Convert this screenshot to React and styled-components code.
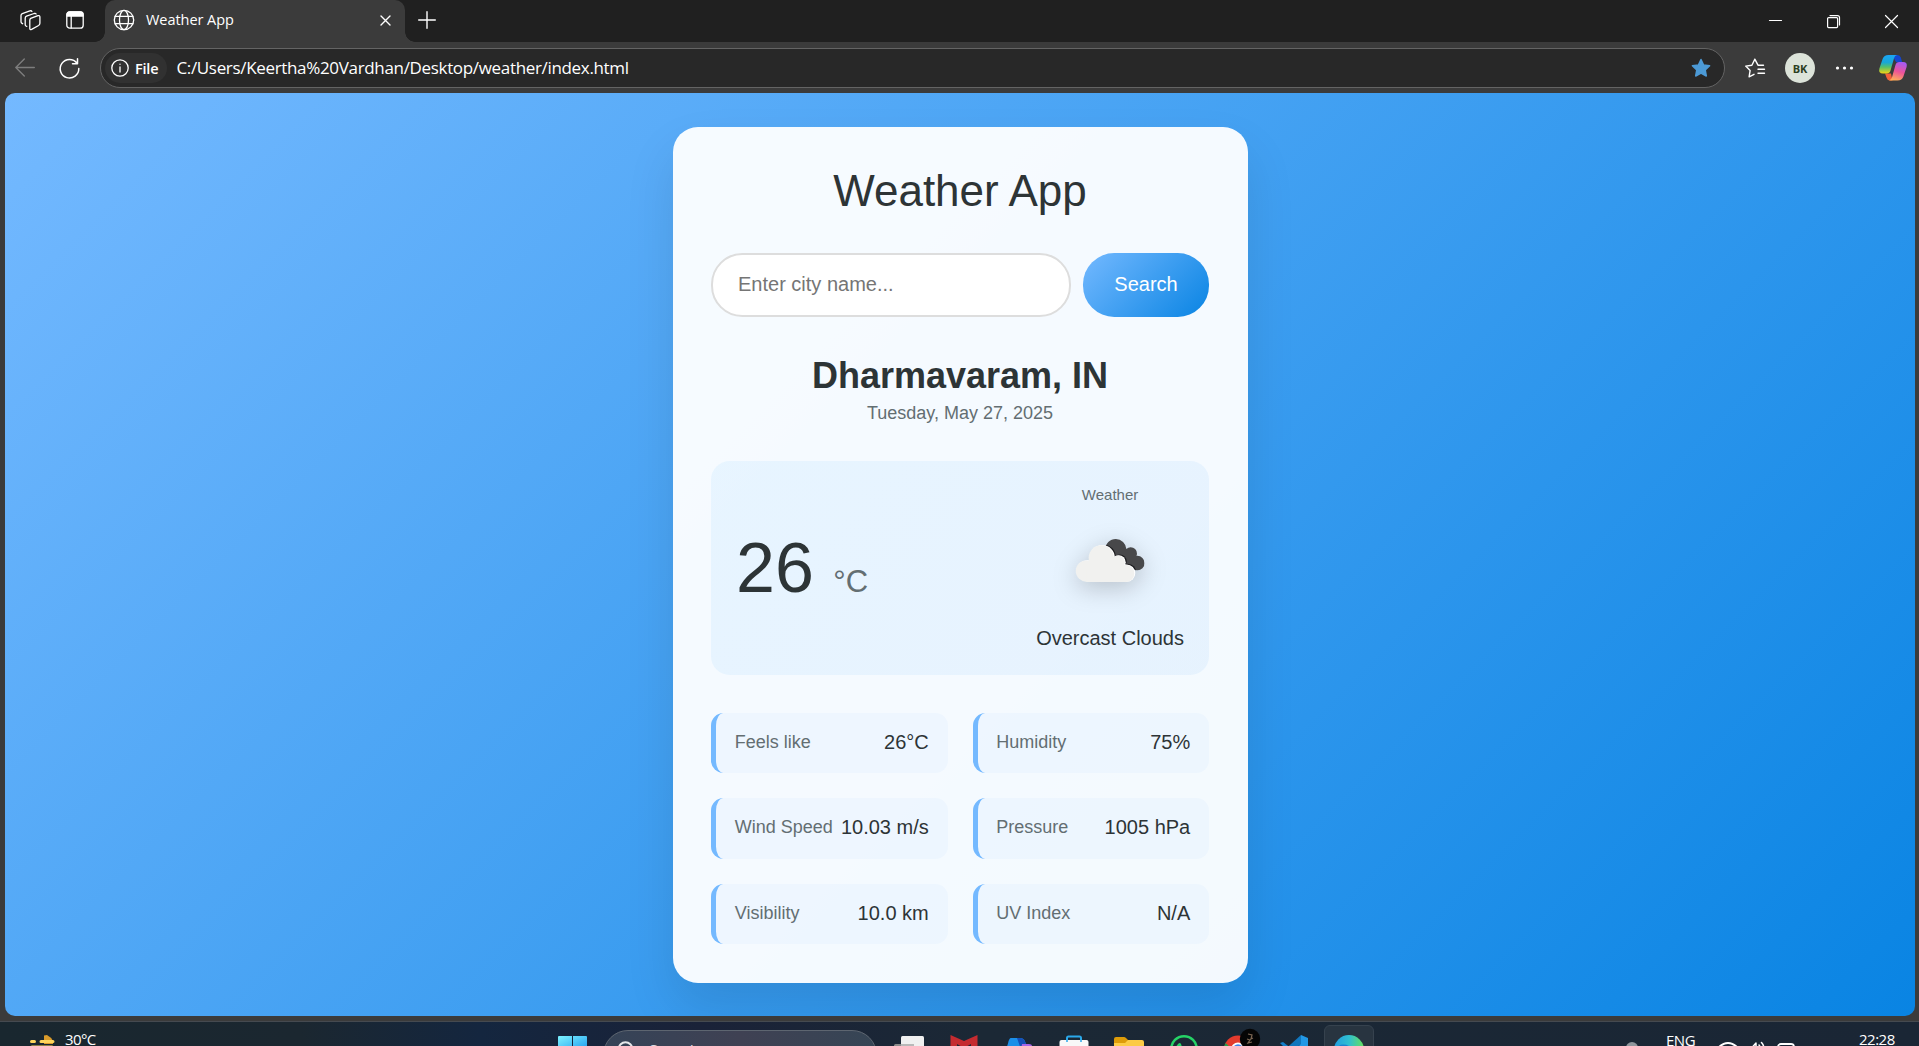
import React from "react";
import styled, { createGlobalStyle, css } from "styled-components";

const Global = createGlobalStyle`
  * { box-sizing: border-box; }
  html, body { margin: 0; padding: 0; overflow: hidden; background: #3b3b3b; }
  button, input { font-family: inherit; }
  svg { display: block; flex: none; overflow: visible; }
`;

const ui = `"Open Sans", "Noto Sans", sans-serif`;

const Window = styled.div`
  width: 1919px;
  height: 1046px;
  display: flex;
  flex-direction: column;
  overflow: hidden;
  background: #3b3b3b;
  color: #fff;
  font-family: ${ui};
`;

const TabStrip = styled.header`
  height: 42px;
  flex: none;
  display: flex;
  background: #202020;
`;

const StripTools = styled.div`
  width: 105px;
  display: flex;
  align-items: center;
  gap: 25px;
  padding: 0 0 2px 20px;
`;

const Tab = styled.div`
  position: relative;
  width: 300px;
  height: 43px;
  display: flex;
  align-items: center;
  padding: 0 14px 3px 8px;
  gap: 11px;
  background: #3b3b3b;
  border-radius: 10px 10px 0 0;
  &::before, &::after {
    content: "";
    position: absolute;
    bottom: 1px;
    width: 10px;
    height: 10px;
  }
  &::before { left: -10px; background: radial-gradient(circle at 0 0, transparent 9.5px, #3b3b3b 10px); }
  &::after { right: -10px; background: radial-gradient(circle at 100% 0, transparent 9.5px, #3b3b3b 10px); }
`;

const TabTitle = styled.span`
  flex: 1;
  font-size: 14.5px;
  line-height: 20px;
  letter-spacing: -0.05px;
`;

const NewTab = styled.div`
  display: flex;
  align-items: center;
  padding: 0 0 3px 13px;
  flex: 1;
`;

const WindowButtons = styled.div`
  display: flex;
  align-items: center;
  gap: 45px;
  padding: 1px 21px 0 0;
`;

const Toolbar = styled.nav`
  height: 51px;
  flex: none;
  display: flex;
  align-items: center;
  padding: 1px 12px 0 15px;
`;

const NavButtons = styled.div`
  display: flex;
  align-items: center;
  gap: 24px;
  width: 85px;
`;

const AddressBar = styled.div`
  width: 1625px;
  height: 40px;
  display: flex;
  align-items: center;
  gap: 9px;
  padding: 0 13px 0 4px;
  background: #282828;
  border: 1.5px solid #646464;
  border-radius: 20px;
`;

const FileChip = styled.div`
  height: 30px;
  display: flex;
  align-items: center;
  gap: 6px;
  padding: 0 9px 0 6px;
  border-radius: 16px;
  background: #313131;
  font-size: 14.5px;
  font-weight: 600;
  letter-spacing: -0.2px;
`;

const Url = styled.span`
  flex: 1;
  font-size: 17px;
  line-height: 24px;
  letter-spacing: -0.33px;
`;

const ToolbarActions = styled.div`
  flex: 1;
  display: flex;
  align-items: center;
  gap: 20px;
  padding-left: 20px;
  & > :last-child { margin-left: auto; }
`;

const Avatar = styled.div`
  width: 30px;
  height: 30px;
  display: grid;
  place-items: center;
  border-radius: 50%;
  background: #dce3d9;
  color: #2c401f;
  font-size: 11px;
  font-weight: 700;
`;

const Page = styled.main`
  height: 923px;
  flex: none;
  margin: 0 4px 0 5px;
  padding-top: 34px;
  display: flex;
  justify-content: center;
  align-items: flex-start;
  overflow: hidden;
  border-radius: 10px;
  background: linear-gradient(135deg, #74b9ff, #0984e3);
  font-family: "Liberation Sans", Arial, sans-serif;
  color: #2d3436;
`;

const Card = styled.section`
  width: 575px;
  height: 856px;
  padding: 37.5px 38.5px;
  border-radius: 25px;
  background: rgba(255, 255, 255, 0.95);
  box-shadow: 0 25px 50px rgba(0, 0, 0, 0.1);
`;

const Title = styled.h1`
  margin: 0 0 37px;
  font-size: 44px;
  line-height: 51px;
  font-weight: 400;
  text-align: center;
`;

const SearchForm = styled.div`
  display: flex;
  gap: 12.5px;
  height: 64px;
  margin-bottom: 38px;
`;

const CityInput = styled.input`
  flex: 1;
  min-width: 0;
  padding: 0 25px 1px;
  border: 2.5px solid #ddd;
  border-radius: 31.25px;
  background: #fff;
  font-size: 20px;
  outline: none;
  &::placeholder { color: #757575; }
`;

const SearchButton = styled.button`
  width: 126px;
  border: 0;
  border-radius: 31.25px;
  background: linear-gradient(135deg, #74b9ff, #0984e3);
  color: #fff;
  font-size: 20px;
`;

const Place = styled.div`
  height: 106px;
  text-align: center;
`;

const City = styled.h2`
  margin: 0 0 5px;
  font-size: 36px;
  line-height: 42px;
  font-weight: 700;
`;

const DateLine = styled.p`
  margin: 0;
  font-size: 18px;
  line-height: 22px;
  color: #636e72;
`;

const Current = styled.div`
  height: 214px;
  margin-bottom: 38px;
  padding: 0 25px;
  display: flex;
  align-items: center;
  justify-content: space-between;
  border-radius: 18.75px;
  background: linear-gradient(135deg, rgba(116, 200, 255, 0.11), rgba(60, 150, 245, 0.075));
`;

const Temperature = styled.div`
  padding-top: 14px;
  font-size: 70px;
  line-height: 80px;
`;

const Unit = styled.span`
  font-size: 31px;
  color: #636e72;
`;

const Conditions = styled.div`
  height: 100%;
  padding: 24px 0 24px;
  display: flex;
  flex-direction: column;
  align-items: center;
`;

const ConditionLabel = styled.span`
  font-size: 15px;
  line-height: 20px;
  color: #636e72;
`;

const CloudIcon = styled.svg`
  margin: 34px 0 45px;
  filter: drop-shadow(0 6px 12px rgba(0, 0, 0, 0.2));
`;

const ConditionText = styled.span`
  font-size: 20px;
  line-height: 23px;
`;

const Details = styled.div`
  display: grid;
  grid-template-columns: 1fr 1fr;
  grid-auto-rows: 60.5px;
  gap: 25px;
`;

const Detail = styled.div`
  display: flex;
  align-items: center;
  justify-content: space-between;
  padding: 0 18.75px 1px;
  border-left: 5px solid #74b9ff;
  border-radius: 12.5px;
  background: rgba(116, 180, 250, 0.05);
  white-space: nowrap;
`;

const DetailLabel = styled.span`
  font-size: 18px;
  line-height: 23px;
  color: #636e72;
`;

const DetailValue = styled.span`
  font-size: 20px;
  line-height: 23px;
`;

const Taskbar = styled.footer`
  height: 25px;
  margin-top: 5px;
  flex: none;
  display: flex;
  align-items: flex-start;
  overflow: hidden;
  border-top: 1px solid #454a50;
  background: linear-gradient(90deg, #19272f 0, #1b2730 300px, #14263f 480px, #1a2238 700px, #1b2835 980px, #1a2635 100%);
`;

const WeatherWidget = styled.div`
  width: 558px;
  display: flex;
  padding: 8px 0 0 29px;
  gap: 10px;
  font-size: 15px;
  line-height: 18px;
  letter-spacing: -0.6px;
`;

const TaskSearch = styled.div`
  width: 274px;
  height: 50px;
  margin: 8px 4px 0 16px;
  padding: 10px 0 0 13px;
  display: flex;
  gap: 14px;
  border: 1px solid #5d6570;
  border-radius: 25px;
  background: linear-gradient(90deg, #354357, #3f4153 50%, #364555);
  color: #d8dce2;
  font-size: 16px;
  line-height: 20px;
`;

const TaskItem = styled.div`
  width: 55px;
  height: 50px;
  display: flex;
  justify-content: center;
  padding-top: 13px;
  ${(p) => p.$active && css`
    width: 50px;
    margin: 3px 0 0 3px;
    padding-top: 9px;
    border: 1px solid #36424e;
    border-radius: 6px;
    background: #283440;
  `}
`;

const Tray = styled.div`
  width: 327px;
  margin-left: auto;
  display: flex;
  font-size: 15px;
  line-height: 18px;
  letter-spacing: -0.5px;
`;

const TraySlot = styled.div`
  width: ${(p) => p.$w}px;
  padding-top: ${(p) => p.$top}px;
  flex: none;
`;

const Line = ({ w, h = w, sw = 1.4, color = "#fff", children }) => (
  <svg width={w} height={h} viewBox={`0 0 ${w} ${h}`} fill="none" stroke={color} strokeWidth={sw} strokeLinecap="round" strokeLinejoin="round">
    {children}
  </svg>
);

const Glyph = ({ children }) => <svg width="30" height="30" viewBox="0 0 30 30">{children}</svg>;

const STAR = "M10 1.5l2.6 5.5 6 .8-4.4 4.2 1.1 6L10 15.1 4.7 18l1.1-6L1.4 7.8l6-.8z";

const details = [
  ["Feels like", "26°C"],
  ["Humidity", "75%"],
  ["Wind Speed", "10.03 m/s"],
  ["Pressure", "1005 hPa"],
  ["Visibility", "10.0 km"],
  ["UV Index", "N/A"],
];

function BrowserTabs() {
  return (
    <TabStrip>
      <StripTools>
        <Line w={21} h={21} sw={1.3}>
          <path d="M10.700 8.400l7.200-2.700q2-.6 2 1.300v6.300q0 1.400-1.300 2.200l-7 3.900q-1.800.8-1.800-1V10.200q0-1.300.9-1.800z" />
          <path d="M6.800 16.300l-.8-.3q-.8-.5-.8-1.500V8.300q0-1.500 1.300-2.100l7.600-2.700q1.600-.4 2 .5" />
          <path d="M2.600 13.700l-.6-.3q-1-.5-1-1.600V5.600q0-1.400 1.300-2L9.900.9q1.600-.4 2 .5" />
        </Line>
        <Line w={18} h={18} sw={1.300}>
          <rect x=".8" y=".8" width="16.400" height="16.400" rx="3" />
          <path d="M1 3.500q0-2.500 2.500-2.500h11Q17 1 17 3.500V5H1z" fill="#fff" />
          <path d="M5.200 5v12" />
        </Line>
      </StripTools>
      <Tab>
        <Line w={22} sw={1.300}>
          <circle cx="11" cy="11" r="9.700" />
          <ellipse cx="11" cy="11" rx="4.500" ry="9.700" />
          <path d="M2.100 7.300h17.800M2.100 14.700h17.800" />
        </Line>
        <TabTitle>Weather App</TabTitle>
        <Line w={11} sw={1.400}><path d="M1 1l9 9M10 1l-9 9" /></Line>
      </Tab>
      <NewTab>
        <Line w={18} sw={1.400}><path d="M9 .7v16.600M.7 9h16.600" /></Line>
      </NewTab>
      <WindowButtons>
        <Line w={13} sw={1.200}><path d="M.5 5.500h12" /></Line>
        <Line w={13} sw={1.200}>
          <rect x=".6" y="2.600" width="10" height="10" rx="1" />
          <path d="M3 .6h7.500q2 0 2 2V10" />
        </Line>
        <Line w={13} sw={1.200}><path d="M.5.500l12 12M12.500.500l-12 12" /></Line>
      </WindowButtons>
    </TabStrip>
  );
}

function BrowserToolbar() {
  return (
    <Toolbar>
      <NavButtons>
        <Line w={20} color="#7d7d7d"><path d="M19.300 9.500H.8M9.300 1L.8 9.500l8.500 8.500" /></Line>
        <Line w={21} sw={1.500}><path d="M18 5.200A9.300 9.300 0 1 0 19.800 10.500M18.500.8v5h-5" /></Line>
      </NavButtons>
      <AddressBar>
        <FileChip>
          <Line w={18} sw={1.300}>
            <circle cx="9" cy="9" r="8.200" />
            <path d="M9 8v5M9 5.200v.1" />
          </Line>
          File
        </FileChip>
        <Url>C:/Users/Keertha%20Vardhan/Desktop/weather/index.html</Url>
        <svg width="20" height="20" viewBox="0 0 20 20" fill="#4c9ad6" stroke="#4c9ad6" strokeWidth="1.500" strokeLinejoin="round"><path d={STAR} /></svg>
      </AddressBar>
      <ToolbarActions>
        <Line w={20} h={20} sw={1.400}>
          <path d="M18.500 7.200h-5.500L9.800 1.200 6.900 7.200l-6.200.9 4.400 4.500-1 6.300L9 16.300M13 11.200h6.500M13 15.200h6.500" />
        </Line>
        <Avatar>BK</Avatar>
        <svg width="18" height="4" fill="#fff"><circle cx="2.500" cy="2" r="1.600" /><circle cx="9.500" cy="2" r="1.600" /><circle cx="16.500" cy="2" r="1.600" /></svg>
        <CopilotLogo size={28} />
      </ToolbarActions>
    </Toolbar>
  );
}

function CopilotLogo({ size }) {
  return (
    <svg width={size} height={size} viewBox="0 0 28 28">
      <defs>
        <linearGradient id="cpA" x1="0" y1="0" x2="0" y2="1"><stop offset="0" stopColor="#1ba5f5" /><stop offset=".4" stopColor="#18a7d8" /><stop offset=".65" stopColor="#55c06a" /><stop offset="1" stopColor="#f3d313" /></linearGradient>
        <linearGradient id="cpB" x1=".6" y1="0" x2=".3" y2="1"><stop offset="0" stopColor="#a65af0" /><stop offset=".5" stopColor="#ee5397" /><stop offset="1" stopColor="#ffb058" /></linearGradient>
      </defs>
      <path d="M13 1h5.500q2.500 0 3.300 2.500l1.400 4.700h-6z" fill="#1446d0" />
      <path d="M6 19.500h6l1.500 7H11q-2.500 0-3.300-2.500z" fill="#f2603a" />
      <path d="M9.500 1h8.500q-2.300.5-3 3.300l-3.400 12q-.9 3.200-4 3.200H4Q-.8 19.500.4 14.500L3.600 5q1.400-4 5.900-4z" fill="url(#cpA)" />
      <path d="M18.500 26.500H10q2.300-.5 3-3.300l3.400-12Q17.300 8 20.400 8H24q4.800 0 3.600 5L24.400 22.500q-1.400 4-5.900 4z" fill="url(#cpB)" />
    </svg>
  );
}

function CloudBody(props) {
  return (
    <g {...props}>
      <circle cx="77" cy="57" r="38" />
      <circle cx="32" cy="97" r="32" />
      <circle cx="127" cy="71" r="21" />
      <circle cx="151" cy="104" r="26" />
      <path d="M32 80L77 40 127 60 151 90V130H32z" />
    </g>
  );
}

function OvercastIcon() {
  return (
    <CloudIcon width="69" height="43" viewBox="0 0 208 130">
      <defs>
        <clipPath id="rearCloud">
          <circle cx="120" cy="32" r="32" /><circle cx="165" cy="44" r="19" /><circle cx="185" cy="73" r="22" /><path d="M100 45L165 40 190 70 175 92 140 70z" />
        </clipPath>
      </defs>
      <g clipPath="url(#rearCloud)">
        <rect width="208" height="130" fill="#48484a" />
        <CloudBody fill="#1c1c1e" transform="translate(5 -3)" />
      </g>
      <CloudBody fill="#ffffff" transform="translate(2 -1)" />
      <CloudBody fill="#f1f1ef" transform="translate(-1 0)" />
    </CloudIcon>
  );
}

function WeatherCard() {
  return (
    <Card>
      <Title>Weather App</Title>
      <SearchForm>
        <CityInput placeholder="Enter city name..." />
        <SearchButton>Search</SearchButton>
      </SearchForm>
      <Place>
        <City>Dharmavaram, IN</City>
        <DateLine>Tuesday, May 27, 2025</DateLine>
      </Place>
      <Current>
        <Temperature>26 <Unit>°C</Unit></Temperature>
        <Conditions>
          <ConditionLabel>Weather</ConditionLabel>
          <OvercastIcon />
          <ConditionText>Overcast Clouds</ConditionText>
        </Conditions>
      </Current>
      <Details>
        {details.map(([label, value]) => (
          <Detail key={label}>
            <DetailLabel>{label}</DetailLabel>
            <DetailValue>{value}</DetailValue>
          </Detail>
        ))}
      </Details>
    </Card>
  );
}

function SystemTaskbar() {
  return (
    <Taskbar>
      <WeatherWidget>
        <svg width="26" height="20" viewBox="0 0 26 20"><path d="M15 10V5.500L18 5q4 2 6 6v3h-9z" fill="#d99b2b" /><path d="M2.500 11.500h3M12 11.500h12M3 17h20" stroke="#fcd45c" strokeWidth="3" strokeLinecap="round" /></svg>
        30°C
      </WeatherWidget>
      <svg width="29" height="44" viewBox="0 0 29 44">
        <defs><linearGradient id="win" x1="0" y1="0" x2="1" y2="1"><stop offset="0" stopColor="#7df3ff" /><stop offset="1" stopColor="#1e9cf0" /></linearGradient></defs>
        <path d="M0 15q0-1 1-1h13v14H0zM15 14h13q1 0 1 1v13H15z" fill="url(#win)" />
      </svg>
      <TaskSearch>
        <Line w={18} sw={2} color="#e6e8eb"><circle cx="8.500" cy="8" r="6.800" /><path d="M13.500 13l4 4" /></Line>
        Search
      </TaskSearch>
      <TaskItem>
        <Glyph><rect x="0" y="9" width="20" height="18" rx="1.500" fill="#8b8b8b" /><rect x="7" y="1" width="23" height="18" rx="1.500" fill="#f0f0f0" /><path d="M7 9h13v10H7z" fill="#b9b9b9" /></Glyph>
      </TaskItem>
      <TaskItem><Glyph><path d="M1.500 0L15 6 28.500 0v24L15 30 1.500 24z" fill="#c52b30" /><path d="M8 9l7 4 7-4V30H8z" fill="#1b2835" /></Glyph></TaskItem>
      <TaskItem>
        <Glyph>
          <path d="M7 3h9q4 0 5 3.500l2 5h-8l-4 9H6q-6 0-4-6l2-6q1-5.500 3-5.500z" fill="#1b8fe8" />
          <path d="M13 3h3q4 0 5 3.500l2 5h-7z" fill="#1550b8" />
          <path d="M18 9h7q4 0 3 4l-3 9h-9z" fill="#a765e6" />
        </Glyph>
      </TaskItem>
      <TaskItem><Glyph><path d="M8 8V3q0-1.500 1.500-1.500h11Q22 1.500 22 3v5" fill="none" stroke="#2ba8ea" strokeWidth="2" /><rect x=".5" y="5" width="29" height="24" rx="2" fill="#f8f8f8" /><path d="M8 3v4M22 3v4" stroke="#2ba8ea" strokeWidth="1.500" /></Glyph></TaskItem>
      <TaskItem><Glyph><path d="M0 4q0-2 2-2h8q1 0 2 1l2 2H28v8H0z" fill="#dd9c09" /><path d="M0 8h11l3-3h14q2 0 2 2v22H0z" fill="#fccb45" /></Glyph></TaskItem>
      <TaskItem><Glyph><circle cx="15" cy="14" r="12.800" fill="#1b2835" stroke="#25d366" strokeWidth="2.500" /><path d="M9 9q2-2 3 0l1 3-1.500 2q2 4 5 5l2-2 4 2q0 3-3 4-12 0-12-12z" fill="#25d366" /></Glyph></TaskItem>
      <TaskItem>
        <Glyph>
          <circle cx="14" cy="14.500" r="14" fill="#e33b2e" />
          <path d="M1.500 8q-4 9 3 16l8-6z" fill="#25a04c" />
          <circle cx="14" cy="14.500" r="7" fill="#fff" /><circle cx="14" cy="14.500" r="5.200" fill="#3f86ee" />
          <circle cx="26" cy="4" r="10.200" fill="#050505" />
          <path d="M24-1l4 1-1 4 2-1M23 4l3 1-2 3 4-1" fill="none" stroke="#7d6753" strokeWidth="1.200" />
        </Glyph>
      </TaskItem>
      <TaskItem><Glyph><path d="M22 0l7 3v23l-7 3L8 16l13-6z" fill="#2298e6" /><path d="M22 0v9L6 21l-4-3z" fill="#1176bd" /><path d="M1 8l3-1 18 14v8z" fill="#147ec9" /></Glyph></TaskItem>
      <TaskItem $active>
        <svg width="30" height="30" viewBox="0 0 30 30">
          <defs><linearGradient id="edge" x1="0" y1=".3" x2="1" y2=".3"><stop offset="0" stopColor="#229de0" /><stop offset=".5" stopColor="#30bfd0" /><stop offset="1" stopColor="#66e05a" /></linearGradient></defs>
          <circle cx="15" cy="15" r="15" fill="url(#edge)" />
          <path d="M1 14q6-7 14-3l-2 17Q0 28 1 14z" fill="#1d83cf" />
        </svg>
      </TaskItem>
      <Tray>
        <TraySlot $w={34} $top={23}><svg width="4" height="3"><path d="M0 3l2-2 2 2" stroke="#566370" fill="none" /></svg></TraySlot>
        <TraySlot $w={40} $top={20}><svg width="12" height="12"><circle cx="6" cy="6" r="6" fill="#8f969c" /></svg></TraySlot>
        <TraySlot $w={52} $top={9}>ENG</TraySlot>
        <TraySlot $w={31} $top={20}><Line w={20} sw={2}><path d="M1 5q9-8 18 0" /></Line></TraySlot>
        <TraySlot $w={28} $top={18}><Line w={18} sw={1.500}><path d="M1 7h2.500L7 3v12L3.500 12M10 5q2.500 3 0 6M12.500 2.500q4.500 5 0 10" /></Line></TraySlot>
        <TraySlot $w={82} $top={21}><Line w={20} sw={1.800}><rect x="1" y="1" width="16" height="11" rx="3" /></Line></TraySlot>
        <TraySlot $w={60} $top={8}>22:28</TraySlot>
      </Tray>
    </Taskbar>
  );
}

export default function App() {
  return (
    <Window>
      <Global />
      <BrowserTabs />
      <BrowserToolbar />
      <Page><WeatherCard /></Page>
      <SystemTaskbar />
    </Window>
  );
}
